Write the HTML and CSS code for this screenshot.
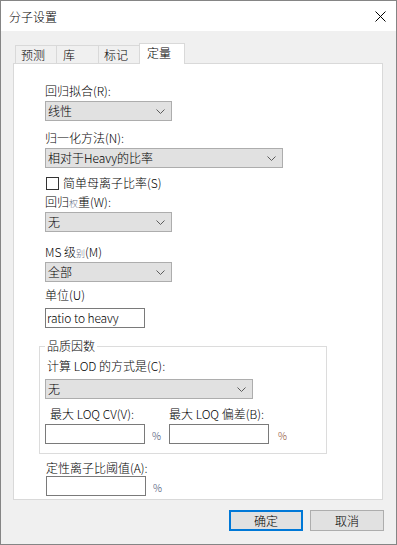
FILE: index.html
```html
<!DOCTYPE html>
<html lang="zh-CN">
<head>
    <meta charset="UTF-8">
    <meta name="viewport" content="width=device-width, initial-scale=1.0">
    <title>分子设置</title>
    <link rel="stylesheet" href="styles.css">
</head>
<body>
    <div class="window">
        <div class="titlebar">
            <span class="title">分子设置</span>
            <svg class="close" width="11" height="11" viewBox="0 0 11 11">
                <path d="M0.5 0.5 L10.5 10.5 M10.5 0.5 L0.5 10.5" stroke="#000" stroke-width="1" fill="none"/>
            </svg>
        </div>

        <div class="client">
            <div class="tabs">
                <div class="tab">预测</div>
                <div class="tab tab-wide">库</div>
                <div class="tab">标记</div>
                <div class="tab active">定量</div>
            </div>

            <div class="panel">
                <div class="label">回归拟合(R):</div>
                <div class="select">
                    <span>线性</span>
                    <svg class="chevron" width="9" height="5" viewBox="0 0 9 5"><path d="M0.5 0.5 L4.5 4.5 L8.5 0.5" stroke="#5c5c5c" fill="none"/></svg>
                </div>

                <div class="label gap">归一化方法(N):</div>
                <div class="select select-long">
                    <span>相对于Heavy的比率</span>
                    <svg class="chevron" width="9" height="5" viewBox="0 0 9 5"><path d="M0.5 0.5 L4.5 4.5 L8.5 0.5" stroke="#5c5c5c" fill="none"/></svg>
                </div>

                <label class="check-row">
                    <span class="checkbox"></span>
                    <span>简单母离子比率(S)</span>
                </label>

                <div class="label tight">回归<span class="fallback">权</span>重(W):</div>
                <div class="select">
                    <span>无</span>
                    <svg class="chevron" width="9" height="5" viewBox="0 0 9 5"><path d="M0.5 0.5 L4.5 4.5 L8.5 0.5" stroke="#5c5c5c" fill="none"/></svg>
                </div>

                <div class="label wide-gap">MS 级<span class="fallback">别</span>(M)</div>
                <div class="select">
                    <span>全部</span>
                    <svg class="chevron" width="9" height="5" viewBox="0 0 9 5"><path d="M0.5 0.5 L4.5 4.5 L8.5 0.5" stroke="#5c5c5c" fill="none"/></svg>
                </div>

                <div class="label small-gap">单位(U)</div>
                <div class="textbox unit">ratio to heavy</div>

                <fieldset class="group">
                    <legend>品质因数</legend>
                    <div class="label lod">计算 LOD 的方式是(C):</div>
                    <div class="select select-lod">
                        <span>无</span>
                        <svg class="chevron" width="9" height="5" viewBox="0 0 9 5"><path d="M0.5 0.5 L4.5 4.5 L8.5 0.5" stroke="#5c5c5c" fill="none"/></svg>
                    </div>
                    <div class="loq-row">
                        <div class="loq-col">
                            <div class="label loq-label">最大 LOQ CV(V):</div>
                            <div class="field">
                                <div class="textbox"></div>
                                <span class="pct">%</span>
                            </div>
                        </div>
                        <div class="loq-col">
                            <div class="label loq-label">最大 LOQ 偏差(B):</div>
                            <div class="field">
                                <div class="textbox"></div>
                                <span class="pct pct-warn">%</span>
                            </div>
                        </div>
                    </div>
                </fieldset>

                <div class="label threshold">定性离子比阈值(A):</div>
                <div class="field threshold-field">
                    <div class="textbox"></div>
                    <span class="pct">%</span>
                </div>
            </div>

            <div class="buttons">
                <button class="btn default">确定</button>
                <button class="btn">取消</button>
            </div>
        </div>
    </div>
</body>
</html>
```

FILE: styles.css
```css
* {
    box-sizing: border-box;
}
body {
    margin: 0;
    font-family: "Noto Sans CJK SC", "Noto Sans", sans-serif;
    font-size: 12px;
    font-weight: 300;
    color: #000;
}
.window {
    width: 397px;
    height: 545px;
    border: 1px solid #858585;
    background: #f0f0f0;
    display: flex;
    flex-direction: column;
}
.titlebar {
    height: 30px;
    background: #fff;
    display: flex;
    align-items: center;
    justify-content: space-between;
    padding: 0 10px 0 8px;
}
.title {
    font-size: 12px;
    line-height: 16px;
    margin-top: 1px;
}
.close {
    display: block;
    margin-top: 1px;
}
.client {
    padding: 12px 12px 0 12px;
}
.tabs {
    display: flex;
    align-items: flex-end;
    height: 20px;
    margin-left: 2px;
}
.tab {
    height: 18px;
    width: 42px;
    margin-right: -1px;
    border: 1px solid #d9d9d9;
    border-bottom: none;
    background: #f0f0f0;
    padding-left: 5px;
    line-height: 17px;
}
.tab-wide {
    width: 43px;
    padding-left: 6px;
}
.tab.active {
    position: relative;
    z-index: 1;
    height: 21px;
    width: 46px;
    margin-bottom: -1px;
    background: #fff;
    padding-left: 7px;
    line-height: 18px;
}
.panel {
    width: 370px;
    height: 437px;
    background: #fff;
    border: 1px solid #d9d9d9;
    padding: 19px 0 0 31px;
}
.label {
    line-height: 16px;
    height: 16px;
    white-space: nowrap;
}
.fallback {
    font-size: 9px;
    color: #6b7388;
}
.gap {
    margin-top: 9px;
}
.tight {
    margin-top: 3px;
}
.wide-gap {
    margin-top: 12px;
}
.small-gap {
    margin-top: 5px;
}
.select {
    margin-top: 2px;
    width: 127px;
    height: 20px;
    background: #e1e1e1;
    border: 1px solid #adadad;
    display: flex;
    align-items: center;
    justify-content: space-between;
    padding: 0 6px 0 2px;
    line-height: 16px;
}
.select-long {
    width: 238px;
}
.chevron {
    display: block;
}
.check-row {
    display: flex;
    align-items: center;
    gap: 4px;
    height: 16px;
    margin-top: 7px;
    margin-left: 1px;
    line-height: 16px;
}
.checkbox {
    width: 13px;
    height: 13px;
    border: 1px solid #333;
    background: #fff;
}
.textbox {
    width: 100px;
    height: 20px;
    border: 1px solid #7a7a7a;
    background: #fff;
    padding-left: 1px;
    line-height: 17px;
    font-size: 12px;
}
.unit {
    margin-top: 5px;
    letter-spacing: -0.1px;
}
.group {
    margin: 10px 0 0 -6px;
    width: 288px;
    border: 1px solid #dcdcdc;
    padding: 0 0 9px 5px;
}
.group legend {
    padding: 0 2px;
    line-height: 16px;
}
.lod {
    margin-top: 4px;
    padding-left: 2px;
}
.select-lod {
    margin-top: 5px;
    width: 208px;
}
.loq-row {
    display: grid;
    grid-template-columns: 124px auto;
    margin-top: 7px;
}
.loq-label {
    padding-left: 5px;
}
.loq-col:last-child .loq-label {
    padding-left: 0;
}
.field {
    display: flex;
    align-items: center;
    gap: 7px;
    margin-top: 2px;
}
.pct {
    font-size: 10px;
    color: #3a4a6a;
    margin-top: 3px;
}
.pct-warn {
    color: #8a4a2a;
    margin-left: 2px;
}
.threshold {
    margin-top: 6px;
    margin-left: 1px;
}
.threshold-field {
    margin-top: 0;
    margin-left: 1px;
}
.buttons {
    display: flex;
    justify-content: flex-end;
    gap: 7px;
    margin-top: 10px;
}
.btn {
    width: 74px;
    height: 21px;
    background: #e1e1e1;
    border: 1px solid #adadad;
    font-family: inherit;
    font-size: 12px;
    font-weight: 300;
    padding: 0;
    color: #000;
}
.btn.default {
    border: 2px solid #0078d7;
}
```
